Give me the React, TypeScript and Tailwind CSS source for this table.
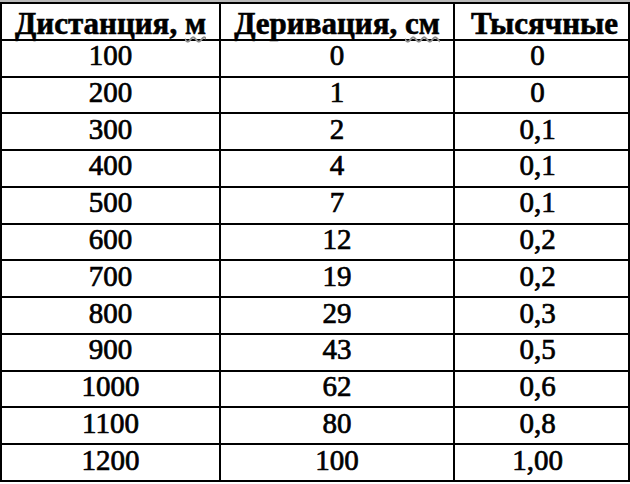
import { Fragment } from "react";

const rows: [string, string, string][] = [
  ["100", "0", "0"],
  ["200", "1", "0"],
  ["300", "2", "0,1"],
  ["400", "4", "0,1"],
  ["500", "7", "0,1"],
  ["600", "12", "0,2"],
  ["700", "19", "0,2"],
  ["800", "29", "0,3"],
  ["900", "43", "0,5"],
  ["1000", "62", "0,6"],
  ["1100", "80", "0,8"],
  ["1200", "100", "1,00"],
];

const cell =
  "flex items-center justify-center border-r-2 border-b-2 border-black";
const head = `${cell} pt-[4px] text-[31px] font-bold leading-none [-webkit-text-stroke:0.6px_black]`;
const body = `${cell} pb-[5px] text-[29px] leading-none [-webkit-text-stroke:0.7px_black]`;

export default function App() {
  return (
    <div className="w-[630px] h-[484px] bg-white text-black font-['Liberation_Serif','Times_New_Roman',serif]">
      <div className="h-[2px] bg-[#b9b9b9]" />
      <div className="grid h-[480px] grid-cols-[221px_234px_175px] grid-rows-[repeat(13,minmax(0,1fr))] border-t-2 border-black">
        {/* header */}
        <div className={`${head} border-l-2`}>
          <span>
            Дистанция,{" "}
            <span className="underline decoration-wavy decoration-[#8f8f8f] decoration-2 underline-offset-2 [-webkit-text-stroke:0.6px_black]">
              м
            </span>
          </span>
        </div>
        <div className={head}>
          <span>
            Деривация,{" "}
            <span className="underline decoration-wavy decoration-[#8f8f8f] decoration-2 underline-offset-2">
              см
            </span>
          </span>
        </div>
        <div className={`${head} pl-[6px]`}>Тысячные</div>

        {rows.map(([dist, deriv, mils]) => (
          <Fragment key={dist}>
            <div className={`${body} border-l-2`}>{dist}</div>
            <div className={body}>{deriv}</div>
            <div className={`${body} pr-[8px]`}>{mils}</div>
          </Fragment>
        ))}
      </div>
    </div>
  );
}
